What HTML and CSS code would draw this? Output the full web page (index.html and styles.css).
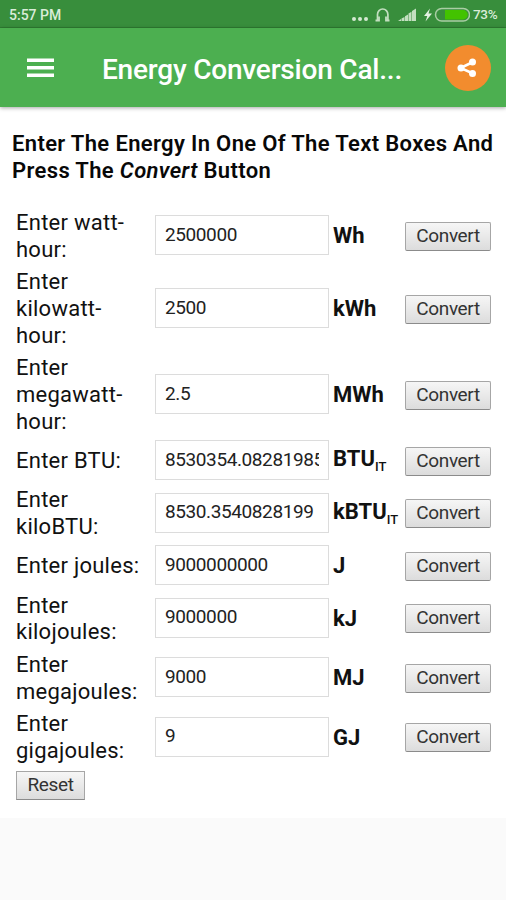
FILE: index.html
```html
<!DOCTYPE html>
<html lang="en">
<head>
<meta charset="utf-8">
<meta name="viewport" content="width=device-width">
<title>Energy Conversion Calculator</title>
<link rel="stylesheet" href="styles.css">
</head>
<body>
<div class="status">
  <span class="time">5:57 PM</span>
  <svg class="status-icons" width="120" height="28" viewBox="350 0 120 28" fill="none">
    <g fill="#d5e9d2"><circle cx="354" cy="19" r="2"/><circle cx="360" cy="19" r="2"/><circle cx="366" cy="19" r="2"/></g>
    <path d="M377.500 20V14.500a5.200 5.500 0 0 1 10.400 0V20" stroke="#c3dfc0" stroke-width="1.700"/>
    <path d="M375.500 20.500h3.500v-4M389.500 20.500H386v-4" stroke="#c3dfc0" stroke-width="1.800"/>
    <path d="M398 21l3-2v2zM401.500 18.500l3-1.500v4h-3zM405 16.300l3-1.800V21h-3zM408.500 13.500l3-1.800V21h-3zM412 11l4-2.500V21h-4z" fill="#c3dfc0"/>
    <path d="M430 8.500l-6 7.500h3.300l-1.800 5.500 6.500-8h-3.500z" fill="#e4f2e2"/>
    <rect x="435.500" y="8.500" width="34" height="12.500" rx="6.250" stroke="#a9cda4" stroke-width="1.500"/>
    <path d="M445 10h18a4.500 4.500 0 0 1 0 9.500h-18z" fill="#43c300"/>
  </svg>
  <span class="percent">73%</span>
</div>
<header class="bar">
  <svg class="menu" width="27" height="20" viewBox="0 0 27 20" fill="#fff"><path d="M0 .5h27v3.500H0zM0 8h27v3.500H0zM0 15.500h27v3.500H0z"/></svg>
  <h1 class="title">Energy Conversion Cal...</h1>
  <div class="share">
    <svg width="46" height="46" viewBox="0 0 46 46"><path d="M28 17l-12.500 6L28 28.500" fill="none" stroke="#fff" stroke-width="2.500"/><g fill="#fff"><circle cx="27.500" cy="17" r="3.500"/><circle cx="16" cy="23" r="3.500"/><circle cx="27.500" cy="28.500" r="3.500"/></g></svg>
  </div>
</header>
<main class="content">
  <h2 class="intro"><span class="line1">Enter The Energy In One Of The Text Boxes And</span><br><span class="line2">Press The <em>Convert</em> Button</span></h2>
  <form class="grid">
    <label>Enter watt-<br>hour:</label><input value="2500000"><b>Wh</b><button type="button">Convert</button>
    <label>Enter<br>kilowatt-<br>hour:</label><input value="2500"><b>kWh</b><button type="button">Convert</button>
    <label>Enter<br>megawatt-<br>hour:</label><input value="2.5"><b>MWh</b><button type="button">Convert</button>
    <label>Enter BTU:</label><input value="8530354.08281985"><b class="has-sub">BTU<sub>IT</sub></b><button type="button">Convert</button>
    <label>Enter<br>kiloBTU:</label><input value="8530.3540828199"><b class="has-sub">kBTU<sub>IT</sub></b><button type="button">Convert</button>
    <label>Enter joules:</label><input value="9000000000"><b>J</b><button type="button">Convert</button>
    <label>Enter<br>kilojoules:</label><input value="9000000"><b>kJ</b><button type="button">Convert</button>
    <label>Enter<br>megajoules:</label><input value="9000"><b>MJ</b><button type="button">Convert</button>
    <label>Enter<br>gigajoules:</label><input value="9"><b>GJ</b><button type="button">Convert</button>
    <button class="reset" type="reset">Reset</button>
  </form>
</main>
</body>
</html>
```
FILE: styles.css
```css
* { box-sizing: border-box; }
body { margin: 0; height: 900px; overflow: hidden; background: #fafafa; color: #111; font-family: Roboto, sans-serif; }
.status { display: flex; align-items: center; height: 28px; padding: 0 8px 0 9px; background: #388e3c; color: #d9ecd8; border-bottom: 1px solid #2e7d32; }
.time { flex: 1; padding-top: 2px; font-size: 14px; font-weight: 500; letter-spacing: 0; }
.status-icons { flex: none; margin-right: 3px; }
.percent { width: 25px; padding-top: 1px; font-size: 13.500px; font-weight: 500; letter-spacing: -.3px; white-space: nowrap; }
.bar { position: relative; display: flex; align-items: center; height: 79px; padding: 0 15px 0 27px; background: #4caf50; box-shadow: 0 1px 4px rgba(0,0,0,.35); }
.menu { flex: none; margin-top: 1px; }
.title { flex: 1; margin: 4px 0 0 48px; color: #fff; font-size: 28px; line-height: 36px; font-weight: 500; letter-spacing: -.2px; white-space: nowrap; }
.share { width: 46px; height: 46px; border-radius: 50%; background: #f28c2e; }
.share svg { display: block; }
.content { height: 711px; padding: 24px 12px 0; background: #fff; }
.intro { margin: 0; font-size: 22px; line-height: 26.700px; font-weight: 600; letter-spacing: .35px; color: #080808; white-space: nowrap; }
.grid { display: grid; grid-template-columns: 139px 178px 72px 86px; grid-template-rows: 53.300px 80px 80px 40px 53.300px 40px 53.300px 53.300px 53.300px 30px; row-gap: 6px; align-items: center; margin: 25.300px 0 0 4px; }
label { padding-top: 1px; font-size: 22px; line-height: 26.700px; letter-spacing: .25px; white-space: nowrap; }
input { width: 174px; height: 40px; margin: 0 0 2px; padding: 0 9px 2px; border: 1px solid #dcdcdc; border-radius: 0; background: #fff; color: #222; font: 19px Roboto, sans-serif; letter-spacing: -.4px; }
b { font-size: 22px; line-height: 26px; font-weight: 700; white-space: nowrap; }
.has-sub { margin-top: -4px; }
sub { font-size: 13px; line-height: 0; font-weight: 500; vertical-align: -5px; }
button { width: 86px; height: 29px; padding: 0 0 2px; border: 1px solid #a6a6a6; border-bottom-color: #8b8b8b; border-radius: 2px; background: linear-gradient(#f6f6f6, #dcdcdc); color: #333; font: 19px Roboto, sans-serif; letter-spacing: -.35px; white-space: nowrap; }
.reset { width: 69px; border-radius: 0; }
```
